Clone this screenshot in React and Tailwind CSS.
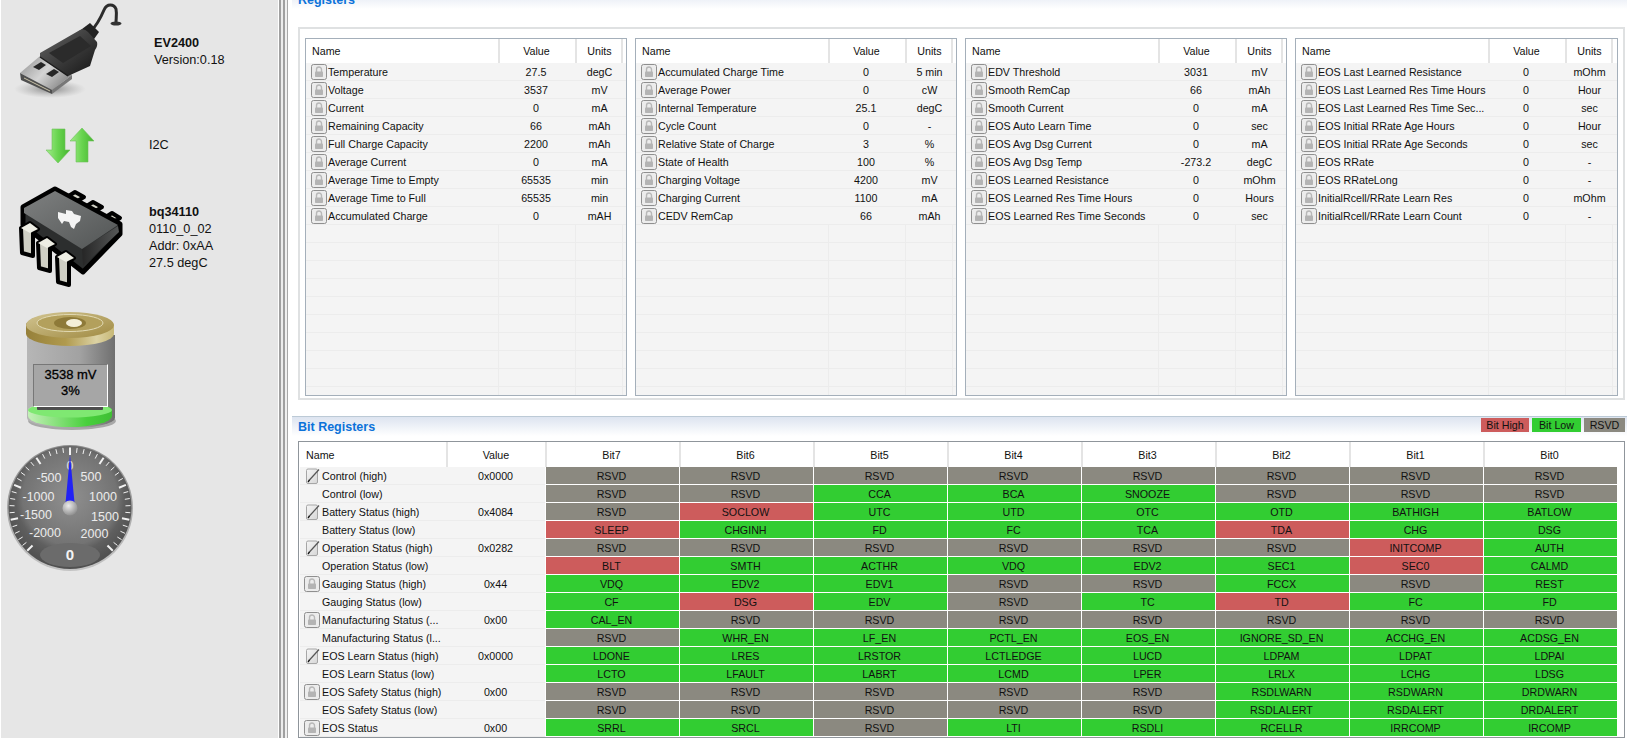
import React from 'react';

const FONT = { fontFamily: '"Liberation Sans", Arial, sans-serif' };

const TABLES = [
  [
    ['Temperature', '27.5', 'degC'],
    ['Voltage', '3537', 'mV'],
    ['Current', '0', 'mA'],
    ['Remaining Capacity', '66', 'mAh'],
    ['Full Charge Capacity', '2200', 'mAh'],
    ['Average Current', '0', 'mA'],
    ['Average Time to Empty', '65535', 'min'],
    ['Average Time to Full', '65535', 'min'],
    ['Accumulated Charge', '0', 'mAH'],
  ],
  [
    ['Accumulated Charge Time', '0', '5 min'],
    ['Average Power', '0', 'cW'],
    ['Internal Temperature', '25.1', 'degC'],
    ['Cycle Count', '0', '-'],
    ['Relative State of Charge', '3', '%'],
    ['State of Health', '100', '%'],
    ['Charging Voltage', '4200', 'mV'],
    ['Charging Current', '1100', 'mA'],
    ['CEDV RemCap', '66', 'mAh'],
  ],
  [
    ['EDV Threshold', '3031', 'mV'],
    ['Smooth RemCap', '66', 'mAh'],
    ['Smooth Current', '0', 'mA'],
    ['EOS Auto Learn Time', '0', 'sec'],
    ['EOS Avg Dsg Current', '0', 'mA'],
    ['EOS Avg Dsg Temp', '-273.2', 'degC'],
    ['EOS Learned Resistance', '0', 'mOhm'],
    ['EOS Learned Res Time Hours', '0', 'Hours'],
    ['EOS Learned Res Time Seconds', '0', 'sec'],
  ],
  [
    ['EOS Last Learned Resistance', '0', 'mOhm'],
    ['EOS Last Learned Res Time Hours', '0', 'Hour'],
    ['EOS Last Learned Res Time Sec...', '0', 'sec'],
    ['EOS Initial RRate Age Hours', '0', 'Hour'],
    ['EOS Initial RRate Age Seconds', '0', 'sec'],
    ['EOS RRate', '0', '-'],
    ['EOS RRateLong', '0', '-'],
    ['InitialRcell/RRate Learn Res', '0', 'mOhm'],
    ['InitialRcell/RRate Learn Count', '0', '-'],
  ],
];

// g = green, r = red, anything without a suffix is RSVD grey
const R = ['RSVD', 'x'];
const g = (t) => [t, 'g'];
const r = (t) => [t, 'r'];

const BIT_ROWS = [
  ['Control (high)', '0x0000', 'pencil', [R, R, R, R, R, R, R, R]],
  ['Control (low)', '', null, [R, R, g('CCA'), g('BCA'), g('SNOOZE'), R, R, R]],
  ['Battery Status (high)', '0x4084', 'pencil', [R, r('SOCLOW'), g('UTC'), g('UTD'), g('OTC'), g('OTD'), g('BATHIGH'), g('BATLOW')]],
  ['Battery Status (low)', '', null, [r('SLEEP'), g('CHGINH'), g('FD'), g('FC'), g('TCA'), r('TDA'), g('CHG'), g('DSG')]],
  ['Operation Status (high)', '0x0282', 'pencil', [R, R, R, R, R, R, r('INITCOMP'), g('AUTH')]],
  ['Operation Status (low)', '', null, [r('BLT'), g('SMTH'), g('ACTHR'), g('VDQ'), g('EDV2'), g('SEC1'), r('SEC0'), g('CALMD')]],
  ['Gauging Status (high)', '0x44', 'lock', [g('VDQ'), g('EDV2'), g('EDV1'), R, R, g('FCCX'), R, g('REST')]],
  ['Gauging Status (low)', '', null, [g('CF'), r('DSG'), g('EDV'), R, g('TC'), r('TD'), g('FC'), g('FD')]],
  ['Manufacturing Status (...', '0x00', 'lock', [g('CAL_EN'), R, R, R, R, R, R, R]],
  ['Manufacturing Status (l...', '', null, [R, g('WHR_EN'), g('LF_EN'), g('PCTL_EN'), g('EOS_EN'), g('IGNORE_SD_EN'), g('ACCHG_EN'), g('ACDSG_EN')]],
  ['EOS Learn Status (high)', '0x0000', 'pencil', [g('LDONE'), g('LRES'), g('LRSTOR'), g('LCTLEDGE'), g('LUCD'), g('LDPAM'), g('LDPAT'), g('LDPAI')]],
  ['EOS Learn Status (low)', '', null, [g('LCTO'), g('LFAULT'), g('LABRT'), g('LCMD'), g('LPER'), g('LRLX'), g('LCHG'), g('LDSG')]],
  ['EOS Safety Status (high)', '0x00', 'lock', [R, R, R, R, R, g('RSDLWARN'), g('RSDWARN'), g('DRDWARN')]],
  ['EOS Safety Status (low)', '', null, [R, R, R, R, R, g('RSDLALERT'), g('RSDALERT'), g('DRDALERT')]],
  ['EOS Status', '0x00', 'lock', [g('SRRL'), g('SRCL'), R, g('LTI'), g('RSDLI'), g('RCELLR'), g('IRRCOMP'), g('IRCOMP')]],
];

const BIT_BG = { g: 'bg-[#32cd32]', r: 'bg-[#cd5c5c]', x: 'bg-[#8b8980]' };

function LockIcon() {
  return (
    <svg width="16" height="16" viewBox="0 0 16 16" className="shrink-0">
      <rect x="0.5" y="0.5" width="15" height="15" rx="2" fill="#ececec" stroke="#8f8f8f" />
      <path d="M5.5 8V5.5a2.5 2.5 0 0 1 5 0V8" fill="none" stroke="#b8b8b8" strokeWidth="1.4" />
      <rect x="4" y="7.5" width="8" height="5.5" rx="0.8" fill="#b4b4b4" />
    </svg>
  );
}

function PencilIcon() {
  return (
    <svg width="16" height="16" viewBox="0 0 16 16" className="shrink-0">
      <defs>
        <linearGradient id="pagePaper" x1="0" y1="0" x2="1" y2="1">
          <stop offset="0" stopColor="#f6f6f6" />
          <stop offset="1" stopColor="#d6d6d6" />
        </linearGradient>
      </defs>
      <rect x="2.5" y="1" width="11" height="14.5" rx="1.5" fill="url(#pagePaper)" stroke="#a6a6a6" />
      <path d="M5 12.5 L15 1.5" stroke="#555" strokeWidth="1.2" />
      <path d="M4 14 L5.5 12" stroke="#111" strokeWidth="1.3" />
    </svg>
  );
}

function UsbPlug() {
  return (
    <svg width="139" height="105" viewBox="1 0 139 105" className="shrink-0">
      <defs>
        <linearGradient id="usbBody" x1="0" y1="0" x2="1" y2="1">
          <stop offset="0" stopColor="#666" />
          <stop offset="0.5" stopColor="#3c3c3c" />
          <stop offset="1" stopColor="#141414" />
        </linearGradient>
        <linearGradient id="usbMetal" x1="0" y1="0" x2="1" y2="0.6">
          <stop offset="0" stopColor="#8c8c8c" />
          <stop offset="0.55" stopColor="#d4d4d4" />
          <stop offset="1" stopColor="#8a8a8a" />
        </linearGradient>
        <radialGradient id="usbShadow">
          <stop offset="0" stopColor="#666" stopOpacity="0.75" />
          <stop offset="1" stopColor="#999" stopOpacity="0" />
        </radialGradient>
      </defs>
      <ellipse cx="50" cy="89" rx="36" ry="9" fill="url(#usbShadow)" />
      <path d="M91 31 C98 24 101 17 104 10 C107 3 114 4 116 9 C117 14 116 18 116 23" fill="none" stroke="#2c2c2c" strokeWidth="3" />
      <ellipse cx="116" cy="23.5" rx="5.5" ry="2" fill="#333" />
      <path d="M78 32 L90 23 L99 32 L92 42 Z" fill="#222" />
      <polygon points="20,73 40,56 72,75 52,90" fill="url(#usbMetal)" />
      <polygon points="20,73 52,90 52,94 21,80" fill="#4f4f4f" />
      <path d="M24 78 L50 91" stroke="#c9c2a8" strokeWidth="1" />
      <polygon points="52,90 72,75 72,79 52,94" fill="#777" />
      <polygon points="33,67 41,62 46,65 39,70" fill="#262626" />
      <polygon points="46,74 54,69 59,72 52,77" fill="#262626" />
      <path d="M40 53 L80 30 Q84 28 88 32 L97 42 Q98 46 95 50 L90 66 L68 76 L40 57 Z" fill="url(#usbBody)" />
      <path d="M49 53 L80 36 L91 46 L63 63 Z" fill="#2b2b2b" />
      <path d="M40 57 L68 76" stroke="#1b1b1b" strokeWidth="1.5" />
    </svg>
  );
}

function Arrows() {
  return (
    <svg width="139" height="70" viewBox="1 105 139 70" className="shrink-0">
      <defs>
        <linearGradient id="arrowGreen" x1="0" y1="0" x2="1" y2="0">
          <stop offset="0" stopColor="#a2ec8a" />
          <stop offset="0.5" stopColor="#68d44f" />
          <stop offset="1" stopColor="#45b52f" />
        </linearGradient>
      </defs>
      <polygon points="52,129 65,129 65,150 70,150 58,163 46,150 52,150" fill="url(#arrowGreen)" stroke="#6fbf5c" strokeWidth="0.6" />
      <polygon points="82,128 94,141 88,141 88,162 76,162 76,141 70,141" fill="url(#arrowGreen)" stroke="#6fbf5c" strokeWidth="0.6" />
    </svg>
  );
}

function Chip() {
  const legs = [[21, 228], [38, 243], [57, 257]];
  return (
    <svg width="139" height="120" viewBox="1 175 139 120" className="shrink-0">
      <defs>
        <linearGradient id="chipTop" x1="0" y1="0" x2="1" y2="1">
          <stop offset="0" stopColor="#7e8080" />
          <stop offset="1" stopColor="#525555" />
        </linearGradient>
        <linearGradient id="chipSide" x1="0" y1="0" x2="1" y2="0">
          <stop offset="0" stopColor="#262626" />
          <stop offset="1" stopColor="#555757" />
        </linearGradient>
      </defs>
      <polygon points="67,197 75,192 84,197 76,202" fill="#d4d4c8" stroke="#000" strokeWidth="4" strokeLinejoin="round" />
      <polygon points="85,207 93,202 102,207 94,212" fill="#d4d4c8" stroke="#000" strokeWidth="4" strokeLinejoin="round" />
      <polygon points="104,218 112,213 120,218 112,223" fill="#d4d4c8" stroke="#000" strokeWidth="4" strokeLinejoin="round" />
      <polygon points="23,207 55,189 120,224 120,234 83,272 23,225" fill="#2c2e2e" stroke="#000" strokeWidth="5" strokeLinejoin="round" />
      <polygon points="82,249 118,226 119,232 83,266" fill="url(#chipSide)" />
      <polygon points="24,208 55,191 118,225 82,249 24,213" fill="url(#chipTop)" />
      {legs.map(([x, y]) => (
        <g key={x}>
          <polygon
            points={`${x},${y} ${x + 9},${y - 5} ${x + 17},${y + 1} ${x + 12},${y + 5} ${x + 12},${y + 28} ${x + 1},${y + 25}`}
            fill="#cfcfc4"
            stroke="#000"
            strokeWidth="4"
            strokeLinejoin="round"
          />
          <polygon points={`${x},${y} ${x + 9},${y - 5} ${x + 17},${y + 1} ${x + 9},${y + 5}`} fill="#eeeee4" />
        </g>
      ))}
      <path d="M58 212 L66 214 L66 210 L72 211 L74 214 L81 216 L80 221 L76 224 L74 229 L71 227 L69 222 L64 221 L62 224 L58 218 Z" fill="#f4f4f4" />
    </svg>
  );
}

function Battery() {
  return (
    <div className="relative h-[140px] w-[139px] shrink-0">
      <svg width="139" height="140" viewBox="1 295 139 140" className="block">
        <defs>
          <linearGradient id="batBody" x1="0" y1="0" x2="1" y2="0">
            <stop offset="0" stopColor="#b6b6b6" />
            <stop offset="0.6" stopColor="#a2a2a2" />
            <stop offset="1" stopColor="#6f6f6f" />
          </linearGradient>
          <linearGradient id="batCap" x1="0" y1="0" x2="1" y2="0">
            <stop offset="0" stopColor="#96803a" />
            <stop offset="0.45" stopColor="#b09a4e" />
            <stop offset="0.8" stopColor="#dcd2a4" />
            <stop offset="1" stopColor="#c7b876" />
          </linearGradient>
          <linearGradient id="batTop" x1="0" y1="0" x2="1" y2="1">
            <stop offset="0" stopColor="#d2c592" />
            <stop offset="1" stopColor="#a08a42" />
          </linearGradient>
          <linearGradient id="batGreen" x1="0" y1="0" x2="1" y2="0">
            <stop offset="0" stopColor="#c4f0b8" />
            <stop offset="0.7" stopColor="#48d03c" />
            <stop offset="1" stopColor="#3fbf34" />
          </linearGradient>
        </defs>
        <ellipse cx="72" cy="421" rx="44" ry="9" fill="#a8a8a8" />
        <path d="M27 335 H115 V418 A44 10 0 0 1 27 418 Z" fill="url(#batBody)" />
        <path d="M28 410 A42 8 0 0 1 112 410 V416 A42 11 0 0 1 28 416 Z" fill="url(#batGreen)" />
        <ellipse cx="70" cy="410" rx="42" ry="7.5" fill="#7fe872" />
        <rect x="37" y="400" width="66" height="10" rx="1" fill="#4e4e4e" />
        <path d="M26 325 A44 12 0 0 1 114 325 V334 A44 12 0 0 1 26 334 Z" fill="url(#batCap)" />
        <ellipse cx="70" cy="325" rx="44" ry="13" fill="url(#batTop)" />
        <ellipse cx="70" cy="323" rx="33" ry="8.5" fill="#b3a05c" stroke="#e2dab4" strokeWidth="1" />
        <ellipse cx="70" cy="323" rx="16" ry="6" fill="#8e7a38" />
        <ellipse cx="74" cy="323" rx="8" ry="4" fill="#f4efd8" />
      </svg>
      <div className="absolute left-[32px] top-[69px] flex h-[43px] w-[75px] flex-col items-center border-b border-l border-r border-t border-b-white border-l-[#777] border-r-white border-t-[#777] bg-[#a6a6a6] pt-[2px] text-[13px] leading-[16px] text-black [-webkit-text-stroke:0.3px_#000]">
        <span>3538 mV</span>
        <span>3%</span>
      </div>
    </div>
  );
}

function Gauge() {
  const ticks = [];
  for (let i = -20; i <= 20; i++) {
    const major = i % 5 === 0;
    const a = (i * 6.75 * Math.PI) / 180;
    const r1 = 60.5;
    const r2 = major ? 53 : 55.5;
    ticks.push(
      <line
        key={i}
        x1={70 + r1 * Math.sin(a)}
        y1={508 - r1 * Math.cos(a)}
        x2={70 + r2 * Math.sin(a)}
        y2={508 - r2 * Math.cos(a)}
        stroke="#f2f2f2"
        strokeWidth={major ? 2 : 1}
      />
    );
  }
  const labels = [
    ['-500', 49, 482], ['500', 91, 481], ['-1000', 38.5, 501], ['1000', 103, 501],
    ['-1500', 36, 519], ['1500', 105, 521], ['-2000', 45, 537], ['2000', 94.5, 538],
  ];
  return (
    <svg width="139" height="140" viewBox="1 440 139 140" className="shrink-0">
      <defs>
        <radialGradient id="dial" cx="50%" cy="42%" r="55%">
          <stop offset="0" stopColor="#8f8f8f" />
          <stop offset="0.7" stopColor="#737373" />
          <stop offset="0.8" stopColor="#5f5f5f" />
          <stop offset="1" stopColor="#515151" />
        </radialGradient>
        <radialGradient id="hub" cx="40%" cy="35%" r="70%">
          <stop offset="0" stopColor="#ececec" />
          <stop offset="1" stopColor="#8a8a8a" />
        </radialGradient>
        <linearGradient id="rim" x1="0" y1="0" x2="0" y2="1">
          <stop offset="0" stopColor="#8c8c8c" />
          <stop offset="1" stopColor="#c4c4c4" />
        </linearGradient>
      </defs>
      <circle cx="70" cy="508" r="63" fill="url(#rim)" />
      <circle cx="70" cy="507.5" r="61.5" fill="url(#dial)" />
      <ellipse cx="70" cy="555" rx="30" ry="12" fill="#6b6b6b" />
      {ticks}
      {labels.map(([t, x, y]) => (
        <text key={t} x={x} y={y} textAnchor="middle" fontSize="12.5" fill="#ececec" style={FONT}>{t}</text>
      ))}
      <text x="70" y="470" textAnchor="middle" fontSize="12.5" fill="#e0e0e0" style={FONT}>0</text>
      <polygon points="70,455 74.5,503 65.5,503" fill="#2222f5" />
      <circle cx="70" cy="508" r="7.5" fill="url(#hub)" />
      <text x="70" y="560" textAnchor="middle" fontSize="15" fontWeight="700" fill="#f4f4f4" style={FONT}>0</text>
    </svg>
  );
}

function Sidebar() {
  return (
    <div className="flex h-full w-[278px] shrink-0 flex-col border-l border-white bg-[#e6e6e6] text-[12.7px] leading-[17px] text-[#111]">
      <div className="flex h-[105px]">
        <UsbPlug />
        <div className="ml-[14px] pt-[35px]">
          <div className="font-bold">EV2400</div>
          <div>Version:0.18</div>
        </div>
      </div>
      <div className="flex h-[70px]">
        <Arrows />
        <div className="ml-[9px] pt-[32px]">I2C</div>
      </div>
      <div className="flex h-[120px]">
        <Chip />
        <div className="ml-[9px] pt-[29px]">
          <div className="font-bold">bq34110</div>
          <div>0110_0_02</div>
          <div>Addr: 0xAA</div>
          <div>27.5 degC</div>
        </div>
      </div>
      <Battery />
      <div className="mt-[5px]">
        <Gauge />
      </div>
    </div>
  );
}

function Splitter() {
  return (
    <div className="flex h-full w-[14px] shrink-0">
      <div className="w-[1px] bg-white" />
      <div className="w-[2px] bg-[#a0a0a0]" />
      <div className="w-[2px] bg-[#ececec]" />
      <div className="w-[2px] bg-[#a0a0a0]" />
      <div className="w-[2px] bg-[#f0f0f0]" />
      <div className="w-[1px] bg-[#a8a8a8]" />
      <div className="flex-1 bg-white" />
    </div>
  );
}

function RegisterTable({ rows }) {
  const blanks = Array.from({ length: 19 - rows.length });
  return (
    <div className="h-[358px] overflow-hidden border border-[#a4afba] bg-white">
      <div className="grid h-[24px] grid-cols-[192px_77px_48px] items-center">
        <div className="flex h-full items-center pl-[6px]">Name</div>
        <div className="flex h-full items-center justify-center border-l-2 border-[#e4e4e4] pr-[2px]">Value</div>
        <div className="flex h-full items-center justify-center border-l-2 border-r-2 border-[#e4e4e4] pl-[1px]">Units</div>
      </div>
      {rows.map(([name, value, units]) => (
        <div key={name} className="grid h-[18px] grid-cols-[192px_77px_48px] items-center border-b border-[#ececec] bg-[#f4f4f4]">
          <div className="flex items-center gap-[1px] whitespace-nowrap pl-[5px]">
            <LockIcon />
            <span>{name}</span>
          </div>
          <div className="pr-[1px] text-center">{value}</div>
          <div className="pl-[1px] text-center">{units}</div>
        </div>
      ))}
      {blanks.map((_, i) => (
        <div key={i} className="grid h-[18px] grid-cols-[192px_77px_48px] border-b border-[#ececec] bg-[#f4f4f4]">
          <div />
          <div className="border-l border-[#ececec]" />
          <div className="border-l border-r border-[#ececec]" />
        </div>
      ))}
    </div>
  );
}

function BitRow({ row }) {
  const [name, value, icon, bits] = row;
  return (
    <div className="grid h-[18px] grid-cols-[146px_99px_repeat(8,134px)] items-stretch">
      <div className="flex items-center gap-[2px] whitespace-nowrap border-b border-[#ececec] bg-[#f4f4f4] pl-[4px]">
        <div className="w-[16px] shrink-0">
          {icon === 'lock' && <LockIcon />}
          {icon === 'pencil' && <PencilIcon />}
        </div>
        <span>{name}</span>
      </div>
      <div className="flex items-center justify-center border-b border-[#ececec] bg-[#f4f4f4]">{value}</div>
      {bits.map(([label, kind], i) => (
        <div key={i} className={`flex items-center justify-center border-b border-l border-white pr-[2px] text-[#111] ${BIT_BG[kind]}`}>
          {label}
        </div>
      ))}
    </div>
  );
}

function BitTable() {
  const headers = ['Bit7', 'Bit6', 'Bit5', 'Bit4', 'Bit3', 'Bit2', 'Bit1', 'Bit0'];
  return (
    <div className="ml-[6px] mr-[2px] mt-[5px] flex-1 border border-[#8f959b] pl-[1px]">
      <div className="grid h-[25px] grid-cols-[146px_99px_repeat(8,134px)] items-center">
        <div className="flex h-full items-center pl-[6px]">Name</div>
        <div className="flex h-full items-center justify-center border-l-2 border-[#e4e4e4] pr-[1px]">Value</div>
        {headers.map((h) => (
          <div key={h} className="flex h-full items-center justify-center border-l-2 border-[#e4e4e4] pr-[3px]">{h}</div>
        ))}
      </div>
      {BIT_ROWS.map((row) => (
        <BitRow key={row[0]} row={row} />
      ))}
    </div>
  );
}

function TitleBar({ title, className, children }) {
  return (
    <div className={`flex shrink-0 items-start justify-between border-t border-[#bccad6] bg-gradient-to-b from-[#dde4f0] to-white pl-[6px] pr-[2px] ${className}`}>
      <span className="mt-[1px] text-[12.5px] font-bold leading-[18px] text-[#0b72d9]">{title}</span>
      {children}
    </div>
  );
}

export default function App() {
  return (
    <div className="flex h-[738px] w-[1627px] overflow-hidden bg-white text-[10.7px] leading-[16px] text-[#111]" style={FONT}>
      <Sidebar />
      <Splitter />
      <div className="flex min-w-0 flex-1 flex-col">
        <TitleBar title="Registers" className="-mt-[11px] h-[20px]" />
        <div className="ml-[6px] mr-[2px] mt-[18px] h-[373px] shrink-0 border-2 border-[#dfe1e2] pb-[2px] pl-[5px] pr-[5px] pt-[9px]">
          <div className="grid grid-cols-[322px_322px_322px_323px] gap-[8px]">
            {TABLES.map((rows, i) => (
              <RegisterTable key={i} rows={rows} />
            ))}
          </div>
        </div>
        <TitleBar title="Bit Registers" className="mt-[16px] h-[20px]">
          <div className="mt-[1px] flex gap-[3px] text-[#111]">
            <div className="flex h-[14px] w-[48px] items-center justify-center bg-[#cd5c5c]">Bit High</div>
            <div className="flex h-[14px] w-[49px] items-center justify-center bg-[#32cd32]">Bit Low</div>
            <div className="flex h-[14px] w-[41px] items-center justify-center bg-[#8b8980]">RSVD</div>
          </div>
        </TitleBar>
        <BitTable />
      </div>
    </div>
  );
}
